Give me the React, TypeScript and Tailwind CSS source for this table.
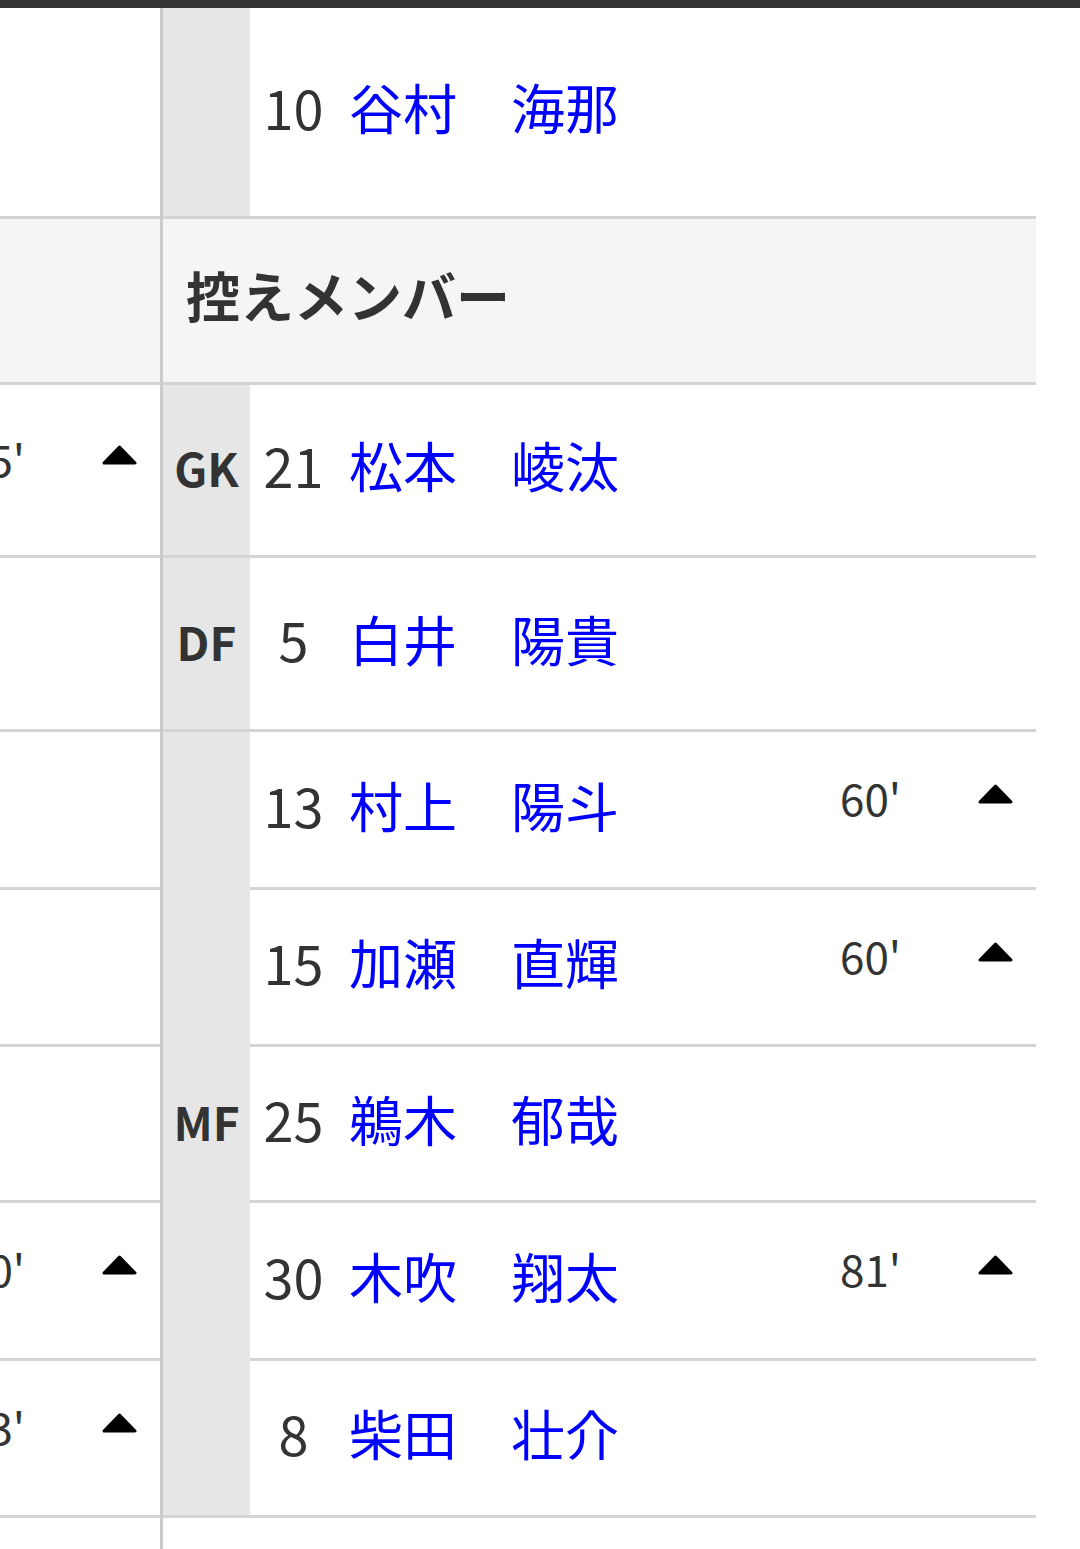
import React from 'react';

type Player = {
  no: string;
  name: string;
  sub?: string;
  h: number;
};

type Group = {
  pos: string;
  rows: Player[];
};

const FONT = { fontFamily: '"Noto Sans CJK JP", "Noto Sans", sans-serif' };

// left-hand table (the other team), only its right edge is on screen
const LEFT: { h: number; sub?: string; head?: boolean }[] = [
  { h: 211 },
  { h: 166, head: true },
  { h: 173, sub: "65'" },
  { h: 174 },
  { h: 158 },
  { h: 157 },
  { h: 156 },
  { h: 158, sub: "70'" },
  { h: 157, sub: "63'" },
];

const SUBS: Group[] = [
  { pos: 'GK', rows: [{ no: '21', name: '松本　崚汰', h: 173 }] },
  { pos: 'DF', rows: [{ no: '5', name: '白井　陽貴', h: 174 }] },
  {
    pos: 'MF',
    rows: [
      { no: '13', name: '村上　陽斗', sub: "60'", h: 158 },
      { no: '15', name: '加瀬　直輝', sub: "60'", h: 157 },
      { no: '25', name: '鵜木　郁哉', h: 156 },
      { no: '30', name: '木吹　翔太', sub: "81'", h: 158 },
      { no: '8', name: '柴田　壮介', h: 157 },
    ],
  },
];

function UpArrow() {
  return (
    <svg width="35" height="20" viewBox="0 0 35 20" aria-hidden="true">
      <polygon
        points="17.5,2 33,18 2,18"
        fill="#000"
        stroke="#000"
        strokeWidth="3"
        strokeLinejoin="round"
      />
    </svg>
  );
}

function SubCells({ sub }: { sub?: string }) {
  return (
    <>
      <div className="w-[130px] shrink-0 pl-[15px] pb-[25px] text-[44px] leading-none text-[#333]">
        {sub}
      </div>
      <div className="w-[81px] shrink-0 flex justify-center pb-[31px]">
        {sub && <UpArrow />}
      </div>
    </>
  );
}

function PlayerRow({ p, last }: { p: Player; last?: boolean }) {
  return (
    <div
      className={
        'flex items-center box-border ' + (last ? '' : 'border-b-[3px] border-[#d4d4d4]')
      }
      style={{ height: last ? p.h - 3 : p.h }}
    >
      <div className="w-[87px] shrink-0 pb-[10px] text-center text-[54px] leading-none text-[#333]">
        {p.no}
      </div>
      <div className="flex-1 pl-[12px] pb-[10px] text-[54px] leading-none text-[#0000ff] whitespace-nowrap">
        {p.name}
      </div>
      <SubCells sub={p.sub} />
    </div>
  );
}

export default function App() {
  return (
    <div className="w-[1080px] min-h-[1549px] bg-white overflow-hidden" style={FONT}>
      <div className="h-[8px] bg-[#333]" />
      <div className="flex w-[1036px]">
        {/* other team, clipped */}
        <div className="w-[160px] shrink-0 flex flex-col">
          {LEFT.map((r, i) => (
            <div
              key={i}
              className={
                'box-border border-b-[3px] border-[#d4d4d4] flex items-center justify-end overflow-hidden ' +
                (r.head ? 'bg-[#f5f5f5]' : 'bg-white')
              }
              style={{ height: r.h }}
            >
              <SubCells sub={r.sub} />
            </div>
          ))}
          <div className="h-[100px]" />
        </div>

        <div className="w-[3px] shrink-0 bg-[#cbcbcb]" />

        <div className="flex-1 flex flex-col">
          {/* last forward */}
          <div className="flex h-[211px] box-border border-b-[3px] border-[#d4d4d4]">
            <div className="w-[87px] shrink-0 bg-[#e6e6e6]" />
            <div className="flex-1 flex items-center">
              <div className="w-[87px] shrink-0 pb-[10px] text-center text-[54px] leading-none text-[#333]">
                10
              </div>
              <div className="flex-1 pl-[12px] pb-[10px] text-[54px] leading-none text-[#0000ff]">
                谷村　海那
              </div>
            </div>
          </div>

          {/* header */}
          <div className="h-[166px] box-border border-b-[3px] border-[#d4d4d4] bg-[#f5f5f5] flex items-center pl-[23px]">
            <h3 className="pb-[12px] text-[54px] font-bold leading-none text-[#333]">
              控えメンバー
            </h3>
          </div>

          {SUBS.map((g) => {
            const total = g.rows.reduce((s, r) => s + r.h, 0);
            const single = g.rows.length === 1;
            return (
              <div
                key={g.pos}
                className={
                  'flex box-border ' + (single ? 'border-b-[3px] border-[#d4d4d4]' : '')
                }
                style={{ height: total }}
              >
                <div
                  className={
                    'w-[87px] shrink-0 bg-[#e6e6e6] flex items-center justify-center box-border ' +
                    (single ? '' : 'border-b-[3px] border-[#d4d4d4]')
                  }
                >
                  <span className="pb-[6px] text-[46px] font-bold leading-none text-[#333]">
                    {g.pos}
                  </span>
                </div>
                <div className="flex-1 flex flex-col">
                  {g.rows.map((p, i) => (
                    <PlayerRow key={p.no} p={p} last={single && i === 0} />
                  ))}
                </div>
              </div>
            );
          })}
          <div className="h-[100px]" />
        </div>
      </div>
    </div>
  );
}
